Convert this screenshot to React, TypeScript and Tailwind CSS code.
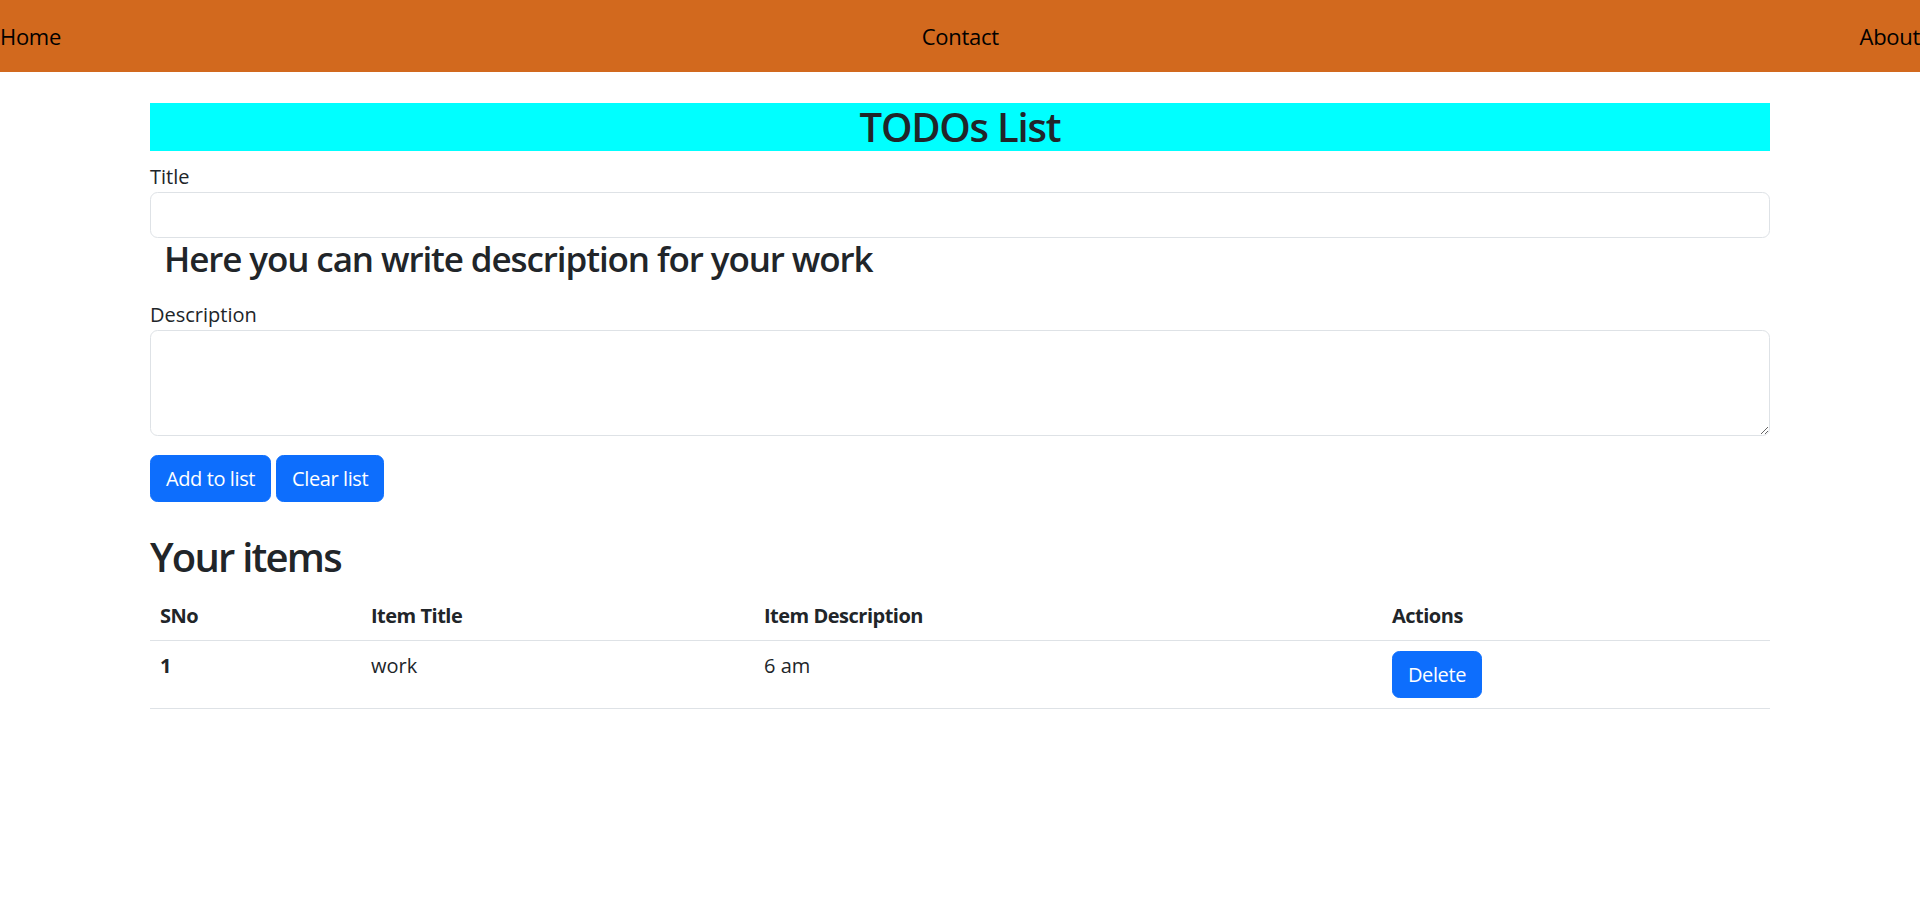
import React from 'react';

const items = [{ sno: 1, title: 'work', desc: '6 am' }];

export default function App() {
    return (
        <div className="min-h-[916px] bg-white text-[#212529] text-[20px] leading-[30px] font-['Open_Sans','Liberation_Sans',sans-serif]">
            {/* Top nav */}
            <nav className="h-[72px] bg-[#D2691E] flex items-center justify-between text-[22px] text-black tracking-[-0.3px]">
                <a href="#" className="block">Home</a>
                <a href="#" className="block">Contact</a>
                <a href="#" className="block">About</a>
            </nav>

            <div className="max-w-[1650px] mx-auto px-[15px]">
                <h2 className="mt-[31px] mb-[10px] bg-[#00ffff] text-center text-[40px] leading-[48px] font-semibold tracking-[-1.2px]">
                    TODOs List
                </h2>

                <label className="block pt-[1px]">Title</label>
                <input
                    type="text"
                    className="block w-full h-[46px] border border-[#dee2e6] rounded-[7.5px] px-[15px] outline-none"
                />

                <h3 className="pl-[14px] mb-[20px] text-[35px] leading-[42px] font-semibold tracking-[-1.1px]">
                    Here you can write description for your work
                </h3>

                <label className="block">Description</label>
                <textarea
                    rows={3}
                    className="block w-full h-[106px] border border-[#dee2e6] rounded-[7.5px] px-[15px] py-[7px] outline-none"
                />

                <div className="mt-[19px] flex gap-[5px] tracking-[-0.4px]">
                    <button className="bg-[#0d6efd] text-white px-[15px] py-[7.5px] rounded-[7.5px] border border-[#0d6efd] leading-[30px]">
                        Add to list
                    </button>
                    <button className="bg-[#0d6efd] text-white px-[15px] py-[7.5px] rounded-[7.5px] border border-[#0d6efd] leading-[30px]">
                        Clear list
                    </button>
                </div>

                <h2 className="mt-[29px] mb-[11px] pt-[4px] text-[40px] leading-[44px] font-semibold tracking-[-1.8px]">Your items</h2>

                <table className="w-full table-fixed border-collapse">
                    <colgroup>
                        <col className="w-[211px]" />
                        <col className="w-[393px]" />
                        <col className="w-[628px]" />
                        <col className="w-[388px]" />
                    </colgroup>
                    <thead>
                        <tr className="border-b border-[#dee2e6] tracking-[-0.5px]">
                            <th className="px-[10px] pt-[11px] pb-[9px] text-left font-bold">SNo</th>
                            <th className="px-[10px] pt-[11px] pb-[9px] text-left font-bold">Item Title</th>
                            <th className="px-[10px] pt-[11px] pb-[9px] text-left font-bold">Item Description</th>
                            <th className="px-[10px] pt-[11px] pb-[9px] text-left font-bold">Actions</th>
                        </tr>
                    </thead>
                    <tbody>
                        {items.map((item) => (
                            <tr key={item.sno} className="border-b border-[#dee2e6]">
                                <th className="p-[10px] text-left font-bold align-top">{item.sno}</th>
                                <td className="p-[10px] align-top">{item.title}</td>
                                <td className="p-[10px] align-top">{item.desc}</td>
                                <td className="p-[10px] align-top tracking-[-0.4px]">
                                    <button className="bg-[#0d6efd] text-white px-[15px] py-[7.5px] rounded-[7.5px] border border-[#0d6efd] leading-[30px]">
                                        Delete
                                    </button>
                                </td>
                            </tr>
                        ))}
                    </tbody>
                </table>
            </div>
        </div>
    );
}
